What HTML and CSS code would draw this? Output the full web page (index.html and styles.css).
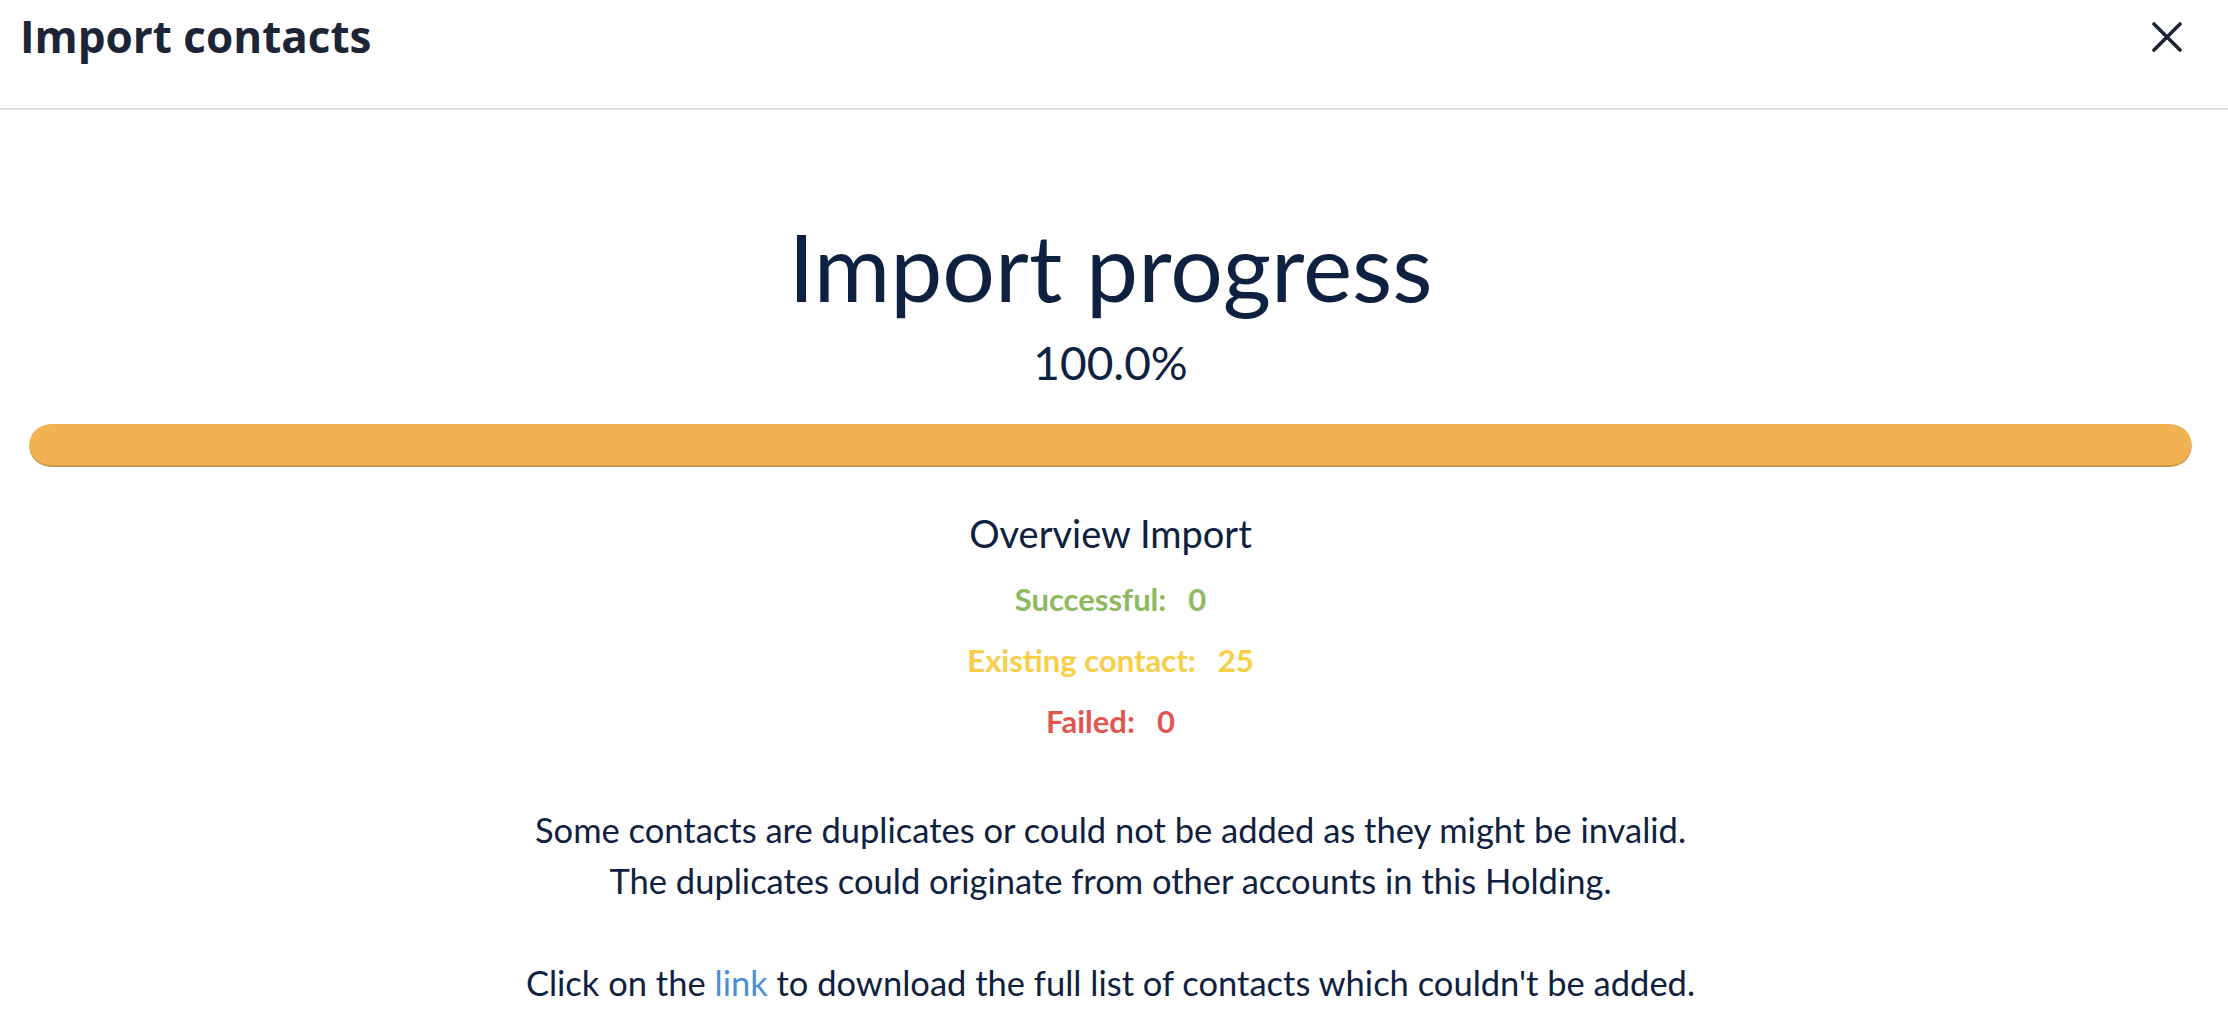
FILE: index.html
```html
<!DOCTYPE html>
<html lang="en">
<head>
<meta charset="utf-8">
<title>Import contacts</title>
<link rel="stylesheet" href="styles.css">
</head>
<body>
<div class="modal">
  <header class="modal-header">
    <h2 class="modal-title">Import contacts</h2>
    <button class="close" type="button" aria-label="Close">
      <svg width="30" height="30" viewBox="0 0 30 30"><path d="M2 2 L28 28 M28 2 L2 28" stroke="#1b2535" stroke-width="3.6" stroke-linecap="round" fill="none"/></svg>
    </button>
  </header>
  <main class="modal-body">
    <h1 class="progress-title">Import progress</h1>
    <div class="progress-percent">100.0%</div>
    <div class="progress">
      <div class="progress-bar" style="width:100%"></div>
    </div>
    <div class="overview-title">Overview Import</div>
    <ul class="stats">
      <li class="stat stat-success"><span class="stat-label">Successful:</span><span class="stat-value">0</span></li>
      <li class="stat stat-existing"><span class="stat-label">Existing contact:</span><span class="stat-value">25</span></li>
      <li class="stat stat-failed"><span class="stat-label">Failed:</span><span class="stat-value">0</span></li>
    </ul>
    <p class="notice">Some contacts are duplicates or could not be added as they might be invalid.<br>The duplicates could originate from other accounts in this Holding.<br><br>Click on the <a href="#" class="link">link</a> to download the full list of contacts which couldn't be added.</p>
  </main>
</div>
</body>
</html>
```
FILE: styles.css
```css
html, body {
  margin: 0;
  padding: 0;
  background: #ffffff;
}
body {
  font-family: Lato, "Open Sans", sans-serif;
  color: #0f2140;
}
.modal-header {
  display: flex;
  justify-content: space-between;
  align-items: flex-start;
  height: 108px;
  padding: 0 46px 0 20px;
  border-bottom: 2px solid #dcdfe3;
}
.modal-title {
  margin: 6px 0 0 0;
  font-family: "Open Sans", sans-serif;
  font-weight: 700;
  font-size: 44px;
  line-height: normal;
  color: #1b2535;
}
.close {
  margin-top: 22px;
  padding: 0;
  border: 0;
  background: none;
  width: 30px;
  height: 30px;
  display: block;
  cursor: pointer;
}
.close svg {
  display: block;
}
.modal-body {
  padding: 0 36px 0 29px;
  text-align: center;
}
.progress-title {
  margin: 99px 0 0 0;
  font-size: 93px;
  font-weight: 400;
  line-height: 115px;
}
.progress-percent {
  margin-top: 10px;
  font-size: 46px;
  line-height: 58px;
}
.progress {
  margin-top: 32px;
  height: 43px;
  border-radius: 22px;
  background: #f1f1f1;
  overflow: hidden;
}
.progress-bar {
  height: 100%;
  background: #f0b253;
  border-radius: 22px;
  box-shadow: inset 0 -2px 0 rgba(0, 0, 0, 0.15);
}
.overview-title {
  margin-top: 44px;
  font-size: 38px;
  line-height: 44px;
}
.stats {
  list-style: none;
  margin: 14px 0 0 0;
  padding: 0;
}
.stat {
  font-size: 31px;
  font-weight: 700;
  line-height: 61px;
}
.stat-value {
  margin-left: 22px;
}
.stat-success { color: #8dba5f; }
.stat-existing { color: #f8ce46; }
.stat-failed { color: #de5753; }
.notice {
  margin: 52px 0 0 0;
  font-size: 34.5px;
  line-height: 51px;
}
.link {
  color: #4a90d9;
  text-decoration: none;
}
```
